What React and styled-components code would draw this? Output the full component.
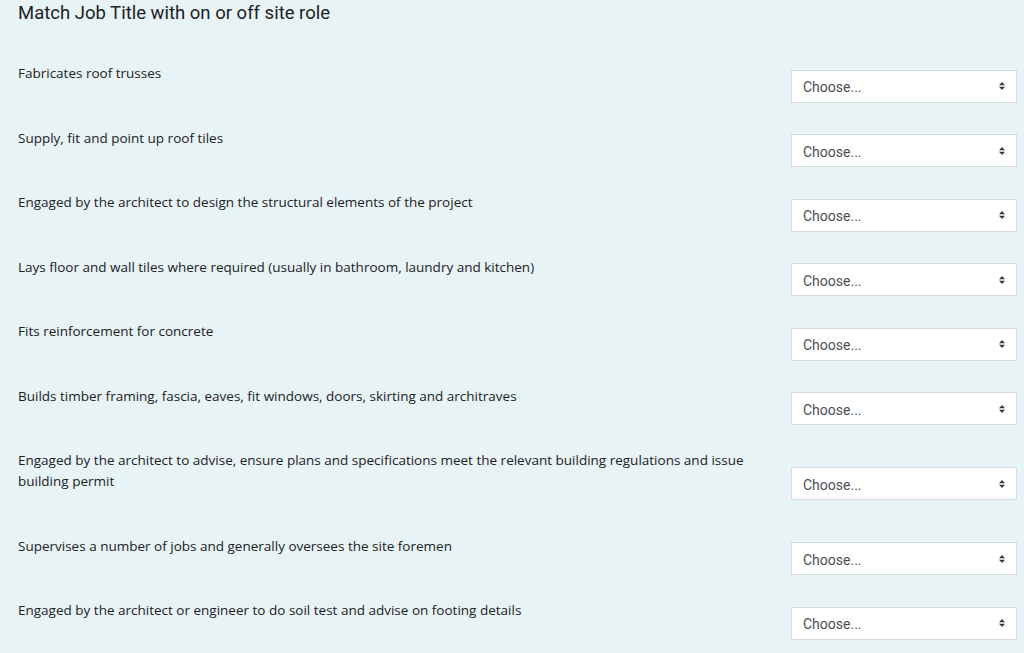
import React from 'react';
import styled, { createGlobalStyle } from 'styled-components';

const GlobalStyle = createGlobalStyle`
  html, body {
    margin: 0;
    padding: 0;
    background: #e7f3f5;
  }
  body {
    font-family: "Open Sans", "Noto Sans", sans-serif;
    color: #1d2125;
  }
`;

const Page = styled.div`
  width: 1024px;
  height: 653px;
  overflow: hidden;
  padding: 0 7px 0 18px;
  box-sizing: border-box;
`;

const Title = styled.h3`
  margin: 0;
  padding-top: 2px;
  height: 52px;
  font-family: Roboto, sans-serif;
  font-weight: 400;
  font-size: 18.5px;
  line-height: 22px;
  color: #1d2125;
`;

const Row = styled.div`
  display: flex;
  align-items: center;
  justify-content: space-between;
  padding: 9px 0 9.55px;
`;

const Prompt = styled.div`
  width: 760px;
  margin-bottom: 25px;
  font-size: 13.5px;
  line-height: 21px;
`;

const SelectBox = styled.div`
  position: relative;
  width: 226px;
  height: 33px;
  box-sizing: border-box;
  background: #fff;
  border: 1px solid #d3dde0;
  display: flex;
  align-items: center;
  padding: 2px 0 0 11px;
  font-family: Roboto, sans-serif;
  font-size: 14px;
  color: #495057;
`;

const Arrows = styled.svg`
  position: absolute;
  right: 11px;
  top: 50%;
  margin-top: -4px;
`;

const items = [
  'Fabricates roof trusses',
  'Supply, fit and point up roof tiles',
  'Engaged by the architect to design the structural elements of the project',
  'Lays floor and wall tiles where required (usually in bathroom, laundry and kitchen)',
  'Fits reinforcement for concrete',
  'Builds timber framing, fascia, eaves, fit windows, doors, skirting and architraves',
  'Engaged by the architect to advise, ensure plans and specifications meet the relevant building regulations and issue building permit',
  'Supervises a number of jobs and generally oversees the site foremen',
  'Engaged by the architect or engineer to do soil test and advise on footing details',
];

function Choose() {
  return (
    <SelectBox>
      Choose...
      <Arrows width="6" height="8" viewBox="0 0 6 8">
        <path d="M3 0 L6 3.2 L0 3.2 Z M3 8 L6 4.8 L0 4.8 Z" fill="#343a40" />
      </Arrows>
    </SelectBox>
  );
}

export default function App() {
  return (
    <>
      <GlobalStyle />
      <Page>
        <Title>Match Job Title with on or off site role</Title>
        {items.map((t, i) => (
          <Row key={i}>
            <Prompt>{t}</Prompt>
            <Choose />
          </Row>
        ))}
      </Page>
    </>
  );
}
